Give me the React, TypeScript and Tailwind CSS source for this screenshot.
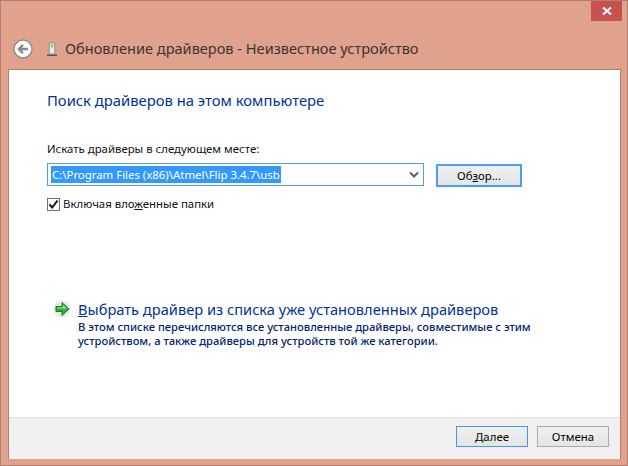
import React from 'react';

function BackIcon() {
  return (
    <svg width="20" height="20" viewBox="0 0 20 20" className="shrink-0">
      <circle cx="10" cy="10" r="9" fill="#fff" stroke="#8c8c8c" strokeWidth="1.4" />
      <path d="M15 10H6.5M10 5.8 5.8 10l4.2 4.2" fill="none" stroke="#8a8a8a" strokeWidth="2.4" />
    </svg>
  );
}

function DeviceIcon() {
  return (
    <svg width="10" height="14" viewBox="0 0 10 14" className="shrink-0">
      <path d="M2.5.5h5l.5 11.5H2z" fill="#e8e8e8" stroke="#8f8f8f" />
      <rect x="4" y="1.5" width="2" height="4" fill="#8fd14f" />
      <rect x="0" y="12.5" width="10" height="1.5" fill="#555" />
    </svg>
  );
}

function ArrowIcon() {
  return (
    <svg width="20" height="18" viewBox="0 0 20 18" className="shrink-0">
      <circle cx="9" cy="9" r="8.5" fill="#d8d8d8" opacity="0.6" />
      <path d="M3 6.5h6V2.5L16 9l-7 6.5v-4H3z" fill="#2fae3c" stroke="#1d7a2a" strokeWidth="1" />
      <path d="M4 7.5h6V5l4 3.5H4z" fill="#a6e88a" />
    </svg>
  );
}

export default function App() {
  return (
    <div className="w-[628px] h-[466px] flex flex-col bg-[#e0a28c] border border-[#b07f6f] text-[11.4px] font-['Noto_Sans','Open_Sans',sans-serif] text-black overflow-hidden">
      <div className="h-5 flex justify-end pr-[5px] shrink-0">
        <div className="w-[31px] h-5 bg-[#c75050] flex items-center justify-center">
          <svg width="10" height="10" viewBox="0 0 10 10">
            <path d="M1 1.5 9 8.5M9 1.5 1 8.5" stroke="#fff" strokeWidth="2" />
          </svg>
        </div>
      </div>
      <div className="h-[48px] flex items-center pl-[12px] gap-[14px] shrink-0 pt-[8px]">
        <BackIcon />
        <div className="flex items-center gap-[8px]">
          <DeviceIcon />
          <span className="text-[14.55px] text-[#3b3330] leading-5 -mt-[2px]">Обновление драйверов - Неизвестное устройство</span>
        </div>
      </div>
      <div className="ml-[7px] mr-[6px] flex-1 flex flex-col border border-[#b07f6f] border-b-0 mb-[6px] bg-white min-h-0">
        <div className="flex-1 pl-[38px] pr-[96px] pt-[20px]">
          <h1 className="text-[14.8px] leading-5 text-[#003399]">Поиск драйверов на этом компьютере</h1>
          <p className="mt-[31px] leading-4 text-[#111]">Искать драйверы в следующем месте:</p>
          <div className="mt-[6px] flex items-start gap-[12px]">
            <div className="w-[377px] h-[23px] border border-[#569de5] flex items-center pl-[3px] pr-[4px] justify-between shrink-0">
              <span className="bg-[#3399ff] text-white leading-[17px] px-px">C:\Program Files (x86)\Atmel\Flip 3.4.7\usb</span>
              <svg width="10" height="8" viewBox="0 0 10 8">
                <path d="M1 1.5 5 5.5 9 1.5" fill="none" stroke="#606060" strokeWidth="2" />
              </svg>
            </div>
            <button className="mt-px w-[86px] h-[23px] shrink-0 border-2 border-[#4a9ff5] bg-gradient-to-b from-[#f0f0f0] to-[#e5e5e5] text-center leading-4">
              Об<span className="underline">з</span>ор...
            </button>
          </div>
          <label className="mt-[9px] flex items-center gap-[3px]">
            <span className="w-[13px] h-[13px] border border-[#707070] flex items-center justify-center">
              <svg width="11" height="11" viewBox="0 0 11 11">
                <path d="M1.5 5.5 4.2 8.5 9.5 1.5" fill="none" stroke="#111" strokeWidth="2" />
              </svg>
            </span>
            <span className="leading-4 text-[#111]">Включая вло<span className="underline">ж</span>енные папки</span>
          </label>
          <div className="mt-[86px] ml-[6px] flex items-start gap-[5px]">
            <div className="pt-[2px]"><ArrowIcon /></div>
            <div className="flex flex-col">
              <span className="text-[14.65px] leading-[22px] text-[#003399] whitespace-nowrap"><span className="underline">В</span>ыбрать драйвер из списка уже установленных драйверов</span>
              <span className="text-[11.2px] leading-[14px] font-medium text-[#00256f] whitespace-nowrap">В этом списке перечисляются все установленные драйверы, совместимые с этим</span>
              <span className="text-[11.2px] leading-[14px] font-medium text-[#00256f] whitespace-nowrap">устройством, а также драйверы для устройств той же категории.</span>
            </div>
          </div>
        </div>
        <div className="h-[42px] shrink-0 bg-[#f0f0f0] border-t border-[#dfdfdf] flex items-start justify-end gap-[9px] pt-[8px] pr-[11px]">
          <button className="w-[72px] h-[21px] border border-[#3c9afc] bg-gradient-to-b from-[#f0f0f0] to-[#e5e5e5] leading-4">
            <span className="underline">Д</span>алее
          </button>
          <button className="w-[72px] h-[21px] border border-[#acacac] bg-gradient-to-b from-[#f0f0f0] to-[#e5e5e5] leading-4">Отмена</button>
        </div>
      </div>
    </div>
  );
}
